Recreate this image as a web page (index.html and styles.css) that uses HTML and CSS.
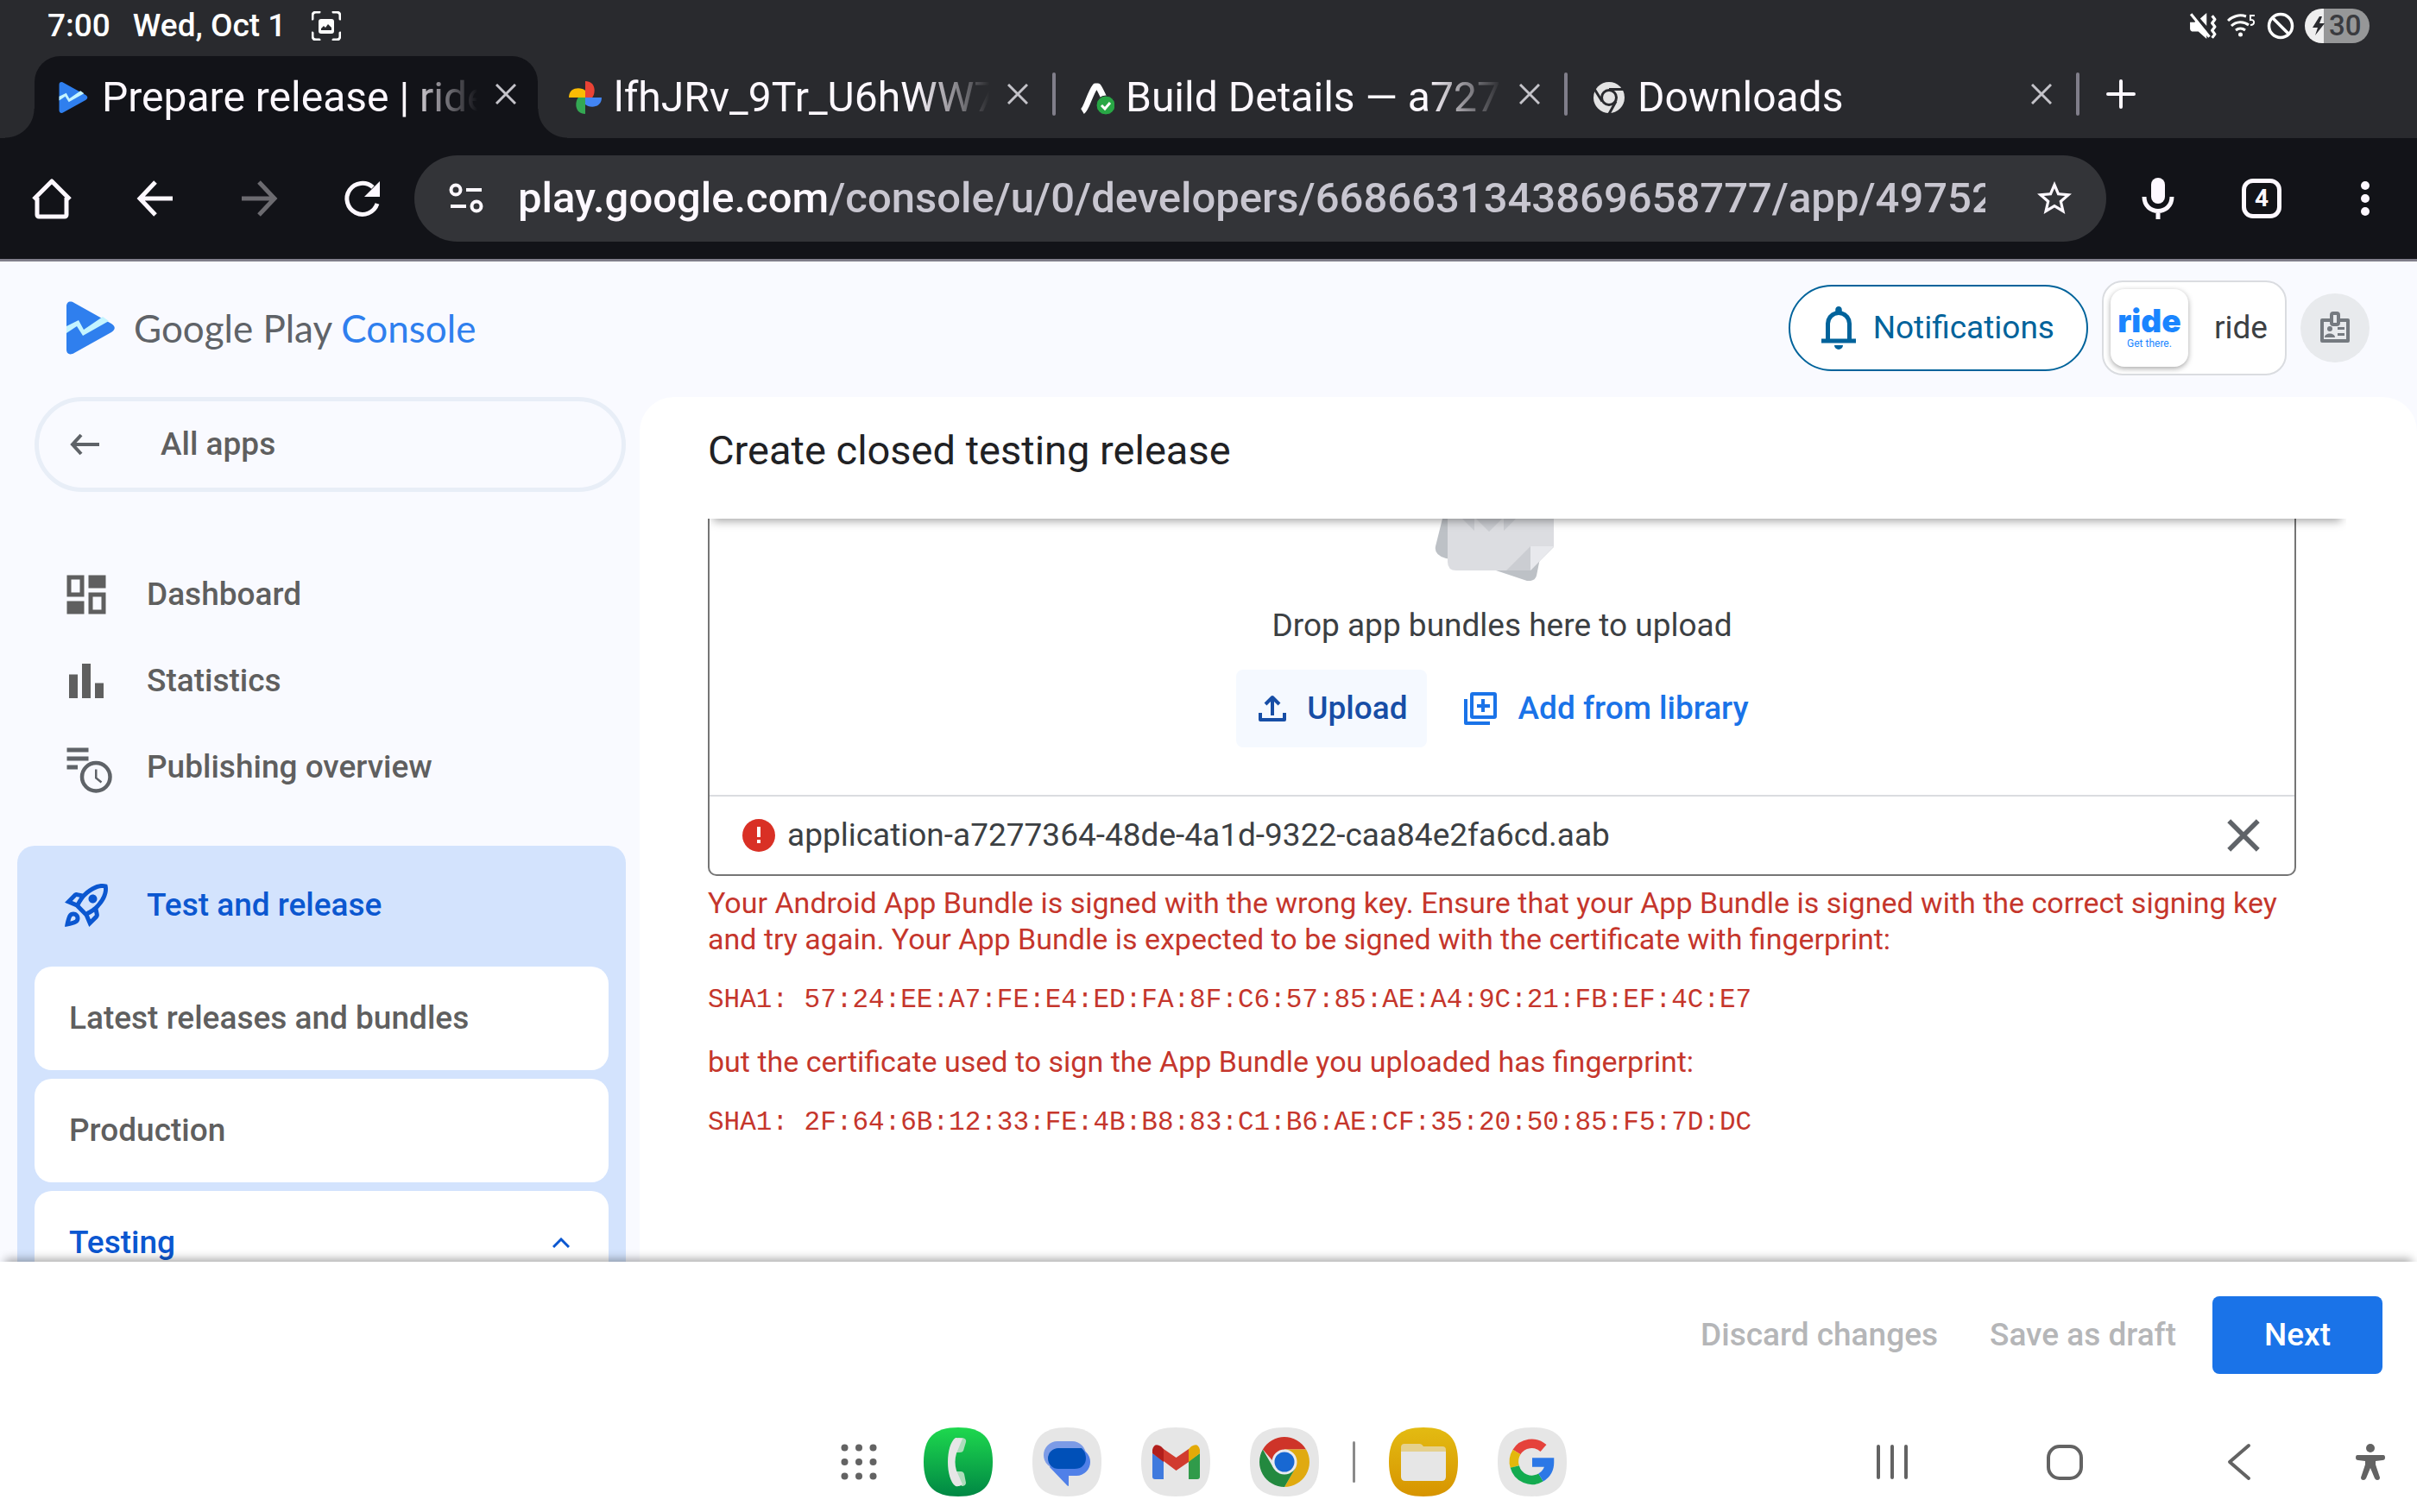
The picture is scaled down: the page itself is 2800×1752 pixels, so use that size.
FILE: index.html
```html
<!DOCTYPE html>
<html lang="en">
<head>
<meta charset="utf-8">
<title>Prepare release | ride</title>
<meta name="viewport" content="width=device-width, initial-scale=1">
<link rel="stylesheet" href="styles.css">
</head>
<body>

<div class="status">
  <div class="status-side">
    <span>7:00</span>
    <span>Wed, Oct 1</span>
    <svg class="i-shot" viewBox="0 0 34 34" aria-hidden="true"><path d="M1 9V5a4 4 0 0 1 4-4h4M25 1h4a4 4 0 0 1 4 4v4M33 25v4a4 4 0 0 1-4 4h-4M9 33H5a4 4 0 0 1-4-4v-4" fill="none" stroke="#fff" stroke-width="3" stroke-linecap="round"/><path fill-rule="evenodd" fill="#fff" d="M11 9h12a3 3 0 0 1 3 3v11a3 3 0 0 1-3 3H11a3 3 0 0 1-3-3V12a3 3 0 0 1 3-3zm0 13h12v-3l-4-4-3 4-2-2-3 3z"/></svg>
  </div>
  <div class="status-side status-right">
    <svg class="i-stat" viewBox="0 0 30 30" aria-hidden="true"><path fill="#fff" d="M1 11h5l2-2 11 12v8l-9-8H3a3 3 0 0 1-2-3zM12 7l7-6v14z"/><path d="M2 2l20 25M25 4l3 4-3 4 3 4-3 4 3 4-3 4" fill="none" stroke="#fff" stroke-width="3" stroke-linejoin="round"/></svg>
    <svg class="i-wifi" viewBox="0 0 34 30" aria-hidden="true"><path d="M1 9a20 20 0 0 1 21-5M5 15a15 15 0 0 1 20-1M10 20a9 9 0 0 1 11 0" fill="none" stroke="#fff" stroke-width="3"/><circle cx="15.500" cy="25" r="2.500" fill="#fff"/><path d="M32 3h-5v5c5-1 6 6 0 6" fill="none" stroke="#fff" stroke-width="2"/></svg>
    <svg class="i-stat" viewBox="0 0 32 32" aria-hidden="true"><circle cx="16" cy="16" r="13.500" fill="none" stroke="#fff" stroke-width="3.500"/><path d="M7 7l18 18" stroke="#fff" stroke-width="3.500"/></svg>
    <span class="battery"><svg class="i-bolt" viewBox="0 0 16 24" aria-hidden="true"><path fill="#2a2b2f" d="M9 1L1 14h6L4 23l11-14H9l3-8z"/></svg>30</span>
  </div>
</div>

<div class="tabs">
  <div class="tab tab-active">
    <svg class="tab-icon" viewBox="-2 -3 60 68" aria-hidden="true"><path fill="#2f7fee" d="M0 6C0 1 4-1 9 2l43 24c5 3 5 7 0 10L9 60c-5 3-9 1-9-4z"/><path fill="#c4f4ff" d="M0 29l14-7 6 11 22-15 7 5-30 17-7-11-12 8z"/></svg>
    <span class="tab-title">Prepare release | ride</span>
    <button class="tab-close" aria-label="Close tab"><svg class="i-x" viewBox="0 0 24 24"><path d="M1 1l22 22M23 1L1 23"/></svg></button>
  </div>
  <span class="tab-gap"></span>
  <div class="tab">
    <svg class="tab-icon" viewBox="0 0 40 40" aria-hidden="true"><path fill="#ea4335" d="M20 20V1c13 0 12 15 8 19z"/><path fill="#4285f4" d="M20 20h19c0 13-15 12-19 8z"/><path fill="#34a853" d="M20 20v19c-13 0-12-15-8-19z"/><path fill="#fbbc04" d="M20 20H1C1 7 16 8 20 12z"/></svg>
    <span class="tab-title">lfhJRv_9Tr_U6hWW7_x</span>
    <button class="tab-close" aria-label="Close tab"><svg class="i-x" viewBox="0 0 24 24"><path d="M1 1l22 22M23 1L1 23"/></svg></button>
  </div>
  <span class="tab-gap tab-line"></span>
  <div class="tab">
    <svg class="tab-icon" viewBox="0 0 40 40" aria-hidden="true"><path d="M3 36c5-3 8-20 15-29h3c4 6 7 14 10 20" fill="none" stroke="#fff" stroke-width="7" stroke-linejoin="round"/><circle cx="30" cy="29" r="11" fill="#28a745" stroke="#292a2e" stroke-width="1"/><path d="M25 29l4 4 6-7" fill="none" stroke="#fff" stroke-width="3"/></svg>
    <span class="tab-title">Build Details — a7277364</span>
    <button class="tab-close" aria-label="Close tab"><svg class="i-x" viewBox="0 0 24 24"><path d="M1 1l22 22M23 1L1 23"/></svg></button>
  </div>
  <span class="tab-gap tab-line"></span>
  <div class="tab">
    <svg class="tab-icon" viewBox="0 0 40 40" aria-hidden="true"><circle cx="20" cy="20" r="18" fill="#e3e3e3"/><circle cx="20" cy="20" r="8.500" fill="#e3e3e3" stroke="#292a2e" stroke-width="3"/><path d="M20 10.500h17M12 24.500L3 10M28 24.500L20 39" stroke="#292a2e" stroke-width="3"/></svg>
    <span class="tab-title">Downloads</span>
    <button class="tab-close" aria-label="Close tab"><svg class="i-x" viewBox="0 0 24 24"><path d="M1 1l22 22M23 1L1 23"/></svg></button>
  </div>
  <span class="tab-gap tab-line"></span>
  <button class="tab-new" aria-label="New tab"><svg class="i-plus" viewBox="0 0 34 34"><path d="M17 2v30M2 17h30"/></svg></button>
</div>

<div class="toolbar">
  <button class="tool" aria-label="Home"><svg class="i-tool" viewBox="0 0 48 48"><path d="M3 25L24 4l21 21M7 23v20a2 2 0 0 0 2 2h30a2 2 0 0 0 2-2V23" fill="none" stroke="#fdf8ff" stroke-width="5" stroke-linejoin="round"/></svg></button>
  <button class="tool" aria-label="Back"><svg class="i-tool" viewBox="0 0 48 48"><path d="M24 5L6 24l18 19M6 24h38" fill="none" stroke="#fdf8ff" stroke-width="5"/></svg></button>
  <button class="tool" aria-label="Forward"><svg class="i-tool" viewBox="0 0 48 48"><path d="M24 5l18 19-18 19M42 24H4" fill="none" stroke="#6c6b70" stroke-width="5"/></svg></button>
  <button class="tool" aria-label="Reload"><svg class="i-tool" viewBox="0 0 48 48"><path d="M41 30A18 18 0 1 1 36 11" fill="none" stroke="#fdf8ff" stroke-width="5"/><path fill="#fdf8ff" d="M44 4v18H26z"/></svg></button>
  <div class="omnibox">
    <button class="tool" aria-label="Site information"><svg class="i-site" viewBox="0 0 40 36"><g fill="none" stroke="#fdf8ff" stroke-width="4"><circle cx="8" cy="8" r="5.500"/><circle cx="32" cy="27" r="5.500"/><path d="M20 8h18M2 27h18"/></g></svg></button>
    <div class="url" role="textbox" aria-label="Address"><span class="url-host">play.google.com</span>/console/u/0/developers/6686631343869658777/app/4975247</div>
    <button class="tool" aria-label="Bookmark"><svg class="i-tool" viewBox="0 0 24 24"><path fill="#fdf8ff" d="M22 9.240l-7.190-.62L12 2 9.190 8.630 2 9.240l5.460 4.730L5.820 21 12 17.270 18.180 21l-1.630-7.030zM12 15.400l-3.760 2.270 1-4.280-3.320-2.880 4.380-.38L12 6.100l1.710 4.040 4.380.38-3.320 2.880 1 4.280z"/></svg></button>
  </div>
  <button class="tool" aria-label="Voice search"><svg class="i-tool" viewBox="0 0 48 48"><rect x="16" y="0" width="16" height="30" rx="8" fill="#fdf8ff"/><path d="M8 22c0 22 32 22 32 0M24 38v10" fill="none" stroke="#fdf8ff" stroke-width="5"/></svg></button>
  <button class="tool" aria-label="Open tabs"><span class="tab-count">4</span></button>
  <button class="tool" aria-label="Menu"><svg class="i-tool" viewBox="0 0 48 48"><g fill="#fdf8ff"><circle cx="24" cy="9" r="5"/><circle cx="24" cy="24" r="5"/><circle cx="24" cy="39" r="5"/></g></svg></button>
</div>

<div class="page">
  <header class="top">
    <a class="brand" href="#">
      <svg class="brand-mark" viewBox="0 0 56 62" aria-hidden="true"><path fill="#2f7fee" d="M0 6C0 1 4-1 9 2l43 24c5 3 5 7 0 10L9 60c-5 3-9 1-9-4z"/><path fill="#c4f4ff" d="M0 29l14-7 6 11 22-15 7 5-30 17-7-11-12 8z"/></svg>
      <span>Google Play <span class="brand-blue">Console</span></span>
    </a>
    <div class="top-right">
      <button class="notif"><svg class="i-nav" viewBox="0 0 24 24" aria-hidden="true"><path fill="#01639b" d="M4 19v-2h2v-7q0-2.080 1.250-3.690Q8.500 4.700 10.500 4.200V3.500q0-.63.44-1.060Q11.370 2 12 2t1.060.44q.44.43.44 1.060v.7q2 .5 3.250 2.110Q18 7.920 18 10v7h2v2zm8 3q-.82 0-1.410-.59Q10 20.830 10 20h4q0 .83-.59 1.410Q12.830 22 12 22zm-4-5h8v-7q0-1.650-1.180-2.830Q13.650 6 12 6q-1.650 0-2.830 1.170Q8 8.350 8 10z"/></svg>Notifications</button>
      <button class="app-switch"><span class="app-icon"><span class="app-name">ride</span><span class="app-tag">Get there.</span></span>ride</button>
      <button class="account" aria-label="Account"><svg class="i-badge" viewBox="0 0 40 40" aria-hidden="true"><g fill="none" stroke="#757a80" stroke-width="4"><path d="M15 11H5v24h30V11H25" stroke-linejoin="round"/><rect x="16" y="3" width="8" height="13" rx="2"/></g><g fill="#757a80"><circle cx="14" cy="21" r="3"/><path d="M8 31c0-6 12-6 12 0zM23 19h8v3h-8zM23 26h8v3h-8z"/></g></svg></button>
    </div>
  </header>

  <div class="columns">
    <nav class="side">
      <a class="all-apps" href="#"><svg class="i-back" viewBox="0 0 36 28" aria-hidden="true"><path d="M14 3L4 14l10 11M4 14h31" fill="none" stroke="#5f6368" stroke-width="4"/></svg>All apps</a>
      <ul class="menu">
        <li><a class="menu-link" href="#"><svg class="i-nav" viewBox="0 0 24 24" aria-hidden="true"><path fill="#5f5f5f" fill-rule="evenodd" d="M3 3h8v10H3zm2 2v6h4V5zM3 15h8v6H3zM13 3h8v6h-8zM13 11h8v10h-8zm2 2v6h4v-6z"/></svg>Dashboard</a></li>
        <li><a class="menu-link" href="#"><svg class="i-nav" viewBox="0 0 24 24" aria-hidden="true"><path fill="#5f5f5f" d="M4 9h4v11H4zM10 4h4v16h-4zM16 13h4v7h-4z"/></svg>Statistics</a></li>
        <li><a class="menu-link" href="#"><svg class="i-nav" viewBox="0 0 24 24" aria-hidden="true"><path fill="#5f6368" d="M3 3h10v2H3zM3 7h10v2H3zM3 11h5v2H3z"/><circle cx="16.500" cy="16.500" r="6.500" fill="none" stroke="#5f6368" stroke-width="1.800"/><path d="M16.500 13v4l2.500 2" fill="none" stroke="#5f6368"/></svg>Publishing overview</a></li>
      </ul>
      <section class="group">
        <a class="menu-link group-title" href="#"><svg class="i-nav" viewBox="0 0 24 24" aria-hidden="true"><path fill="#0b57d0" d="M6 15c-.83 0-1.580.34-2.120.88C2.700 17.060 2 22 2 22s4.940-.7 6.120-1.880C8.660 19.580 9 18.830 9 18c0-1.660-1.340-3-3-3zm.71 3.710c-.28.28-2.170.76-2.170.76s.47-1.880.76-2.170c.17-.19.42-.3.7-.3.55 0 1 .45 1 1 0 .28-.11.53-.29.71zm10.710-5.060c6.360-6.360 4.240-11.310 4.240-11.310S16.710.22 10.350 6.580l-2.490-.5c-.65-.13-1.330.08-1.810.55L2 10.690l5 2.140L11.170 17l2.140 5 4.050-4.050c.47-.47.68-1.150.55-1.810zM7.410 10.830l-1.910-.82 1.970-1.970 1.440.29c-.57.83-1.080 1.700-1.500 2.500zm6.580 7.670l-.82-1.910c.8-.42 1.670-.93 2.490-1.500l.29 1.440zM16 12.240c-1.320 1.320-3.380 2.400-4.040 2.730l-2.930-2.930c.32-.65 1.400-2.710 2.730-4.040 4.680-4.680 8.230-3.990 8.230-3.990s.69 3.550-3.990 8.230zM15 11c1.100 0 2-.9 2-2s-.9-2-2-2-2 .9-2 2 .9 2 2 2z"/></svg>Test and release</a>
        <a class="sub" href="#">Latest releases and bundles</a>
        <a class="sub" href="#">Production</a>
        <a class="sub sub-open" href="#">Testing<svg class="i-chev" viewBox="0 0 20 12" aria-hidden="true"><path d="M1 11l9-9 9 9" fill="none" stroke="#0b57d0" stroke-width="3"/></svg></a>
      </section>
    </nav>

    <main class="panel">
      <div class="panel-head"><h1>Create closed testing release</h1></div>
      <div class="panel-body">
        <div class="upload-box">
          <div class="drop">
            <svg class="sheets" viewBox="0 0 140 72" aria-hidden="true"><path fill="#bdc1c6" d="M10 0h30v50L14 46Q0 42 2 32zM66 58l42 14q9 1 11-6l6-30z"/><path fill="#dcdde1" d="M16 0h123v33l-27 27H26q-10 0-10-10z"/><path fill="#cbcdd2" d="M33 0h14v14zM49 0h30L64 15zM81 0h14L81 14zM112 32v28H84z"/><path fill="#e8e9ed" d="M112 32h27l-27 28z"/></svg>
            <p class="drop-text">Drop app bundles here to upload</p>
            <div class="drop-actions">
              <button class="text-btn upload-btn"><svg class="i-up" viewBox="0 0 32 32" aria-hidden="true"><path d="M16 24V4M8 11l8-8 8 8M2 21v8h28v-8" fill="none" stroke="#174ea6" stroke-width="4" stroke-linejoin="round"/></svg>Upload</button>
              <button class="text-btn"><svg class="i-lib" viewBox="0 0 40 40" aria-hidden="true"><g fill="none" stroke="#1a73e8" stroke-width="4" stroke-linejoin="round"><rect x="10" y="3" width="27" height="27" rx="1"/><path d="M3 9v28h28M23 9v15M16 17h15"/></g></svg>Add from library</button>
            </div>
          </div>
          <div class="file">
            <svg class="i-err" viewBox="0 0 38 38" aria-hidden="true"><circle cx="19" cy="19" r="19" fill="#d93025"/><path fill="#fff" d="M17 9h4v12h-4zM17 24h4v4h-4z"/></svg>
            <span class="file-name">application-a7277364-48de-4a1d-9322-caa84e2fa6cd.aab</span>
            <button class="file-x" aria-label="Remove file"><svg class="i-remove" viewBox="0 0 34 34"><path d="M2 2l30 30M32 2L2 32" stroke="#5f6368" stroke-width="5"/></svg></button>
          </div>
        </div>
        <div class="errors">
          <p>Your Android App Bundle is signed with the wrong key. Ensure that your App Bundle is signed with the correct signing key and try again. Your App Bundle is expected to be signed with the certificate with fingerprint:</p>
          <p class="mono">SHA1: 57:24:EE:A7:FE:E4:ED:FA:8F:C6:57:85:AE:A4:9C:21:FB:EF:4C:E7</p>
          <p>but the certificate used to sign the App Bundle you uploaded has fingerprint:</p>
          <p class="mono">SHA1: 2F:64:6B:12:33:FE:4B:B8:83:C1:B6:AE:CF:35:20:50:85:F5:7D:DC</p>
        </div>
      </div>
    </main>
  </div>
</div>

<footer class="foot">
  <div class="actions">
    <button class="plain" disabled>Discard changes</button>
    <button class="plain" disabled>Save as draft</button>
    <button class="next">Next</button>
  </div>
</footer>

<div class="sysbar">
  <div class="dock">
    <button class="dock-apps" aria-label="All apps"><svg class="i-grid" viewBox="0 0 42 42"><g fill="#636363"><circle cx="4.500" cy="4.500" r="4"/><circle cx="21" cy="4.500" r="4"/><circle cx="37.500" cy="4.500" r="4"/><circle cx="4.500" cy="21" r="4"/><circle cx="21" cy="21" r="4"/><circle cx="37.500" cy="21" r="4"/><circle cx="4.500" cy="37.500" r="4"/><circle cx="21" cy="37.500" r="4"/><circle cx="37.500" cy="37.500" r="4"/></g></svg></button>
    <button class="dock-app" aria-label="Phone"><svg class="i-dock" viewBox="0 0 80 80"><defs><linearGradient id="gp" x2="0" y2="1"><stop offset="0" stop-color="#1ed84e"/><stop offset="1" stop-color="#008744"/></linearGradient></defs><path fill="url(#gp)" d="M40 0C68 0 80 12 80 40S68 80 40 80 0 68 0 40 12 0 40 0z"/><path fill="#addcbb" d="M40 12h5q5 1 4 5l-3 10q-1 2-4 2h-5zM37 51h6q3 0 4 3l2 10q0 4-5 4z"/><path fill="#e6e6e6" d="M45 13l-7 17q-3 10 0 20l7 16q-4 3-8 2C25 60 25 20 37 12q4 0 8 1z"/></svg></button>
    <button class="dock-app" aria-label="Messages"><svg class="i-dock" viewBox="0 0 80 80"><path class="tile" d="M40 0C68 0 80 12 80 40S68 80 40 80 0 68 0 40 12 0 40 0z"/><rect x="13" y="16" width="49" height="32" rx="16" fill="#7c9be6"/><path fill="#5080e8" d="M32 24h19a16 16 0 0 1 0 32h-9v11q0 2-2 0L20 46z"/><path fill="#0050b8" d="M30 24h27c8 7 7 24-8 24H30a12 12 0 0 1 0-24z"/></svg></button>
    <button class="dock-app" aria-label="Gmail"><svg class="i-dock" viewBox="0 0 80 80"><path class="tile" d="M40 0C68 0 80 12 80 40S68 80 40 80 0 68 0 40 12 0 40 0z"/><path fill="#3f7ade" d="M13 30l13 9v21H16a3 3 0 0 1-3-3z"/><path fill="#309b4a" d="M68 30l-13 9v21h10a3 3 0 0 0 3-3z"/><path fill="#d13b2f" d="M26 25l14.500 10L55 25v15L40.500 50 26 39z"/><path fill="#b21f1c" d="M13 30v-4q2-9 10-4l3 3v15z"/><path fill="#e3aa08" d="M68 30v-4q-2-9-10-4l-3 3v15z"/></svg></button>
    <button class="dock-app" aria-label="Chrome"><svg class="i-dock" viewBox="0 0 80 80"><path class="tile" d="M40 0C68 0 80 12 80 40S68 80 40 80 0 68 0 40 12 0 40 0z"/><path fill="#ce3429" d="M40 40H27.500L14.900 25.500A29 29 0 0 1 65 25.500H40z"/><path fill="#e0aa10" d="M40 25.500h25.100A29 29 0 0 1 40 69l12.600-21.800z"/><path fill="#23893f" d="M14.900 25.500A29 29 0 0 0 40 69l12.600-21.800L27.400 47.200z"/><circle cx="40" cy="40" r="14.500" fill="#e8eaf0"/><circle cx="40" cy="40" r="11.500" fill="#1868d2"/></svg></button>
    <span class="dock-line"></span>
    <button class="dock-app" aria-label="My Files"><svg class="i-dock" viewBox="0 0 80 80"><defs><linearGradient id="gf" x2="0" y2="1"><stop offset="0" stop-color="#e3bb12"/><stop offset="1" stop-color="#d79400"/></linearGradient></defs><path fill="url(#gf)" d="M40 0C68 0 80 12 80 40S68 80 40 80 0 68 0 40 12 0 40 0z"/><path fill="#e5d08d" d="M14 30v-7q0-4 4-4h18q2 0 4 3h22q4 0 4 4v4z"/><path fill="#e6e6e6" d="M14 28h52v29q0 5-5 5H19q-5 0-5-5z"/></svg></button>
    <button class="dock-app" aria-label="Google"><svg class="i-dock" viewBox="0 0 80 80"><path class="tile" d="M40 0C68 0 80 12 80 40S68 80 40 80 0 68 0 40 12 0 40 0z"/><g fill="none" stroke-width="10.500"><path stroke="#e5423b" d="M22 28.500A20.500 20.500 0 0 1 53 24"/><path stroke="#e3b80c" d="M19.800 45.500A20.500 20.500 0 0 1 22 28.500"/><path stroke="#14ab50" d="M50 58A20.500 20.500 0 0 1 19.800 45.500"/><path stroke="#2c78e6" d="M40 40.500h20c0 8-4 14-10 17.500"/></g></svg></button>
  </div>
  <div class="sysnav">
    <button class="sys" aria-label="Recents"><svg class="i-sys" viewBox="0 0 44 44"><path d="M6 4v36M22 4v36M38 4v36"/></svg></button>
    <button class="sys" aria-label="Home"><svg class="i-sys" viewBox="0 0 44 44"><rect x="3" y="4" width="38" height="37" rx="13"/></svg></button>
    <button class="sys" aria-label="Back"><svg class="i-sys" viewBox="0 0 44 44"><path d="M35 3L13 22l22 19"/></svg></button>
    <button class="sys sys-narrow" aria-label="Accessibility"><svg class="i-sys" viewBox="0 0 44 44"><g fill="#636363" stroke="none"><circle cx="22" cy="6" r="5"/><path d="M7 14h30q2 0 2 3t-3 3l-8 1v4l5 15q0 3-3 3-2 0-3-2l-5-12-5 12q-1 2-3 2-3 0-3-3l5-15v-4l-8-1q-3 0-3-3t2-3z"/></g></svg></button>
  </div>
</div>

</body>
</html>
```
FILE: styles.css
```css
* {
  box-sizing: border-box;
}

body {
  margin: 0;
  height: 100vh;
  display: flex;
  flex-direction: column;
  overflow: hidden;
  background: #fff;
  color: #5f5f5f;
  font-family: Roboto, "Liberation Sans", sans-serif;
  font-size: 37px;
  line-height: 48px;
}

button {
  margin: 0;
  padding: 0;
  border: 0;
  background: none;
  color: inherit;
  font: inherit;
}

a {
  color: inherit;
  text-decoration: none;
}

svg {
  display: block;
  flex: none;
}

p,
h1,
ul {
  margin: 0;
  padding: 0;
}

ul {
  list-style: none;
}

/* Status bar */

.status {
  flex: none;
  height: 65px;
  padding: 5px 55px 11px;
  display: flex;
  justify-content: space-between;
  align-items: center;
  background: #292a2e;
  color: #fff;
  font-weight: 500;
}

.status-side {
  display: flex;
  align-items: center;
  gap: 26px;
}

.status-right {
  gap: 12px;
}

.i-shot {
  width: 34px;
  height: 34px;
  margin-left: 4px;
}

.i-stat {
  width: 32px;
  height: 32px;
}

.i-wifi {
  width: 34px;
  height: 30px;
}

.battery {
  display: flex;
  align-items: center;
  gap: 4px;
  width: 75px;
  height: 40px;
  padding-left: 8px;
  border-radius: 20px;
  background: linear-gradient(90deg, #efefef 22px, #969798 22px);
  color: #3a3b3f;
  font-size: 33px;
}

.i-bolt {
  width: 16px;
  height: 24px;
}

/* Tab strip */

.tabs {
  flex: none;
  height: 95px;
  padding-left: 40px;
  display: flex;
  align-items: center;
  background: #292a2e;
  color: #fdf8ff;
  font-size: 48px;
}

.tab {
  position: relative;
  flex: 0 1 583px;
  min-width: 0;
  height: 95px;
  padding: 0 17px 0 25px;
  display: flex;
  align-items: center;
}

.tab-active {
  background: #121318;
  border-radius: 30px 30px 0 0;
}

.tab-active::before,
.tab-active::after {
  content: "";
  position: absolute;
  bottom: 0;
  width: 34px;
  height: 34px;
}

.tab-active::before {
  right: 100%;
  background: radial-gradient(circle at 0 0, transparent 33px, #121318 34px);
}

.tab-active::after {
  left: 100%;
  background: radial-gradient(circle at 100% 0, transparent 33px, #121318 34px);
}

.tab-icon {
  width: 40px;
  height: 40px;
  margin-right: 13px;
}

.tab-title {
  flex: 1;
  min-width: 0;
  overflow: hidden;
  white-space: nowrap;
  line-height: 64px;
  -webkit-mask-image: linear-gradient(90deg, #000 calc(100% - 90px), transparent 99%);
  mask-image: linear-gradient(90deg, #000 calc(100% - 90px), transparent 99%);
}

.tab-close {
  width: 40px;
  height: 48px;
  margin: 0 0 8px 8px;
  display: grid;
  place-items: center;
}

.i-x {
  width: 24px;
  height: 24px;
  stroke: #c4c3c9;
  stroke-width: 3px;
}

.tab-gap {
  flex: none;
  width: 4px;
  height: 50px;
  margin: 0 3px 8px;
  border-radius: 2px;
}

.tab-line {
  background: #807e8a;
}

.tab-new {
  margin: 0 0 8px 28px;
}

.i-plus {
  width: 34px;
  height: 34px;
  stroke: #fdf8ff;
  stroke-width: 4px;
  stroke-linecap: round;
}

/* Browser toolbar */

.toolbar {
  flex: none;
  height: 143px;
  display: flex;
  align-items: center;
  background: #121318;
  border-bottom: 3px solid #807e8a;
}

.tool {
  flex: none;
  width: 120px;
  height: 100px;
  display: grid;
  place-items: center;
}

.i-tool {
  width: 48px;
  height: 48px;
}

.i-site {
  width: 40px;
  height: 36px;
}

.omnibox {
  flex: 1;
  min-width: 0;
  height: 100px;
  display: flex;
  align-items: center;
  border-radius: 50px;
  background: #333438;
}

.url {
  flex: 1;
  min-width: 0;
  margin-right: 20px;
  overflow: hidden;
  white-space: nowrap;
  color: #c8c6d0;
  font-size: 49px;
  font-weight: 500;
  line-height: 64px;
}

.url-host {
  color: #fdf8ff;
}

.tab-count {
  width: 46px;
  height: 46px;
  border: 5px solid #fdf8ff;
  border-radius: 13px;
  color: #fdf8ff;
  font-size: 28px;
  font-weight: 700;
  line-height: 36px;
  text-align: center;
}

/* Console header */

.page {
  flex: 1;
  min-height: 0;
  overflow: hidden;
  background: #f9faff;
}

.top {
  height: 157px;
  padding: 0 55px 4px 77px;
  display: flex;
  justify-content: space-between;
  align-items: center;
}

.brand {
  display: flex;
  align-items: center;
  gap: 22px;
  font-family: Lato, sans-serif;
  font-size: 44px;
  line-height: 56px;
  color: #5f6368;
}

.brand-mark {
  width: 56px;
  height: 62px;
}

.brand-blue {
  color: #2f7fee;
}

.top-right {
  display: flex;
  align-items: center;
  gap: 16px;
}

.notif {
  height: 100px;
  padding: 0 37px 0 26px;
  display: flex;
  align-items: center;
  gap: 10px;
  border: 2px solid #01639b;
  border-radius: 50px;
  background: #fff;
  color: #01639b;
}

.i-nav {
  width: 60px;
  height: 60px;
}

.app-switch {
  height: 110px;
  padding: 0 20px 0 8px;
  display: flex;
  align-items: center;
  gap: 30px;
  border: 2px solid #dadce0;
  border-radius: 24px;
  background: #fff;
  color: #3c4043;
}

.app-icon {
  width: 90px;
  height: 90px;
  display: flex;
  flex-direction: column;
  align-items: center;
  justify-content: center;
  border-radius: 16px;
  background: #fff;
  box-shadow: 0 2px 6px rgba(0, 0, 0, 0.35);
  color: #1a85ff;
}

.app-name {
  font-family: Inter, sans-serif;
  font-size: 37px;
  font-weight: 900;
  line-height: 36px;
}

.app-tag {
  font-size: 12px;
  line-height: 16px;
}

.account {
  width: 80px;
  height: 80px;
  display: grid;
  place-items: center;
  border-radius: 50%;
  background: #e8eaed;
}

.i-badge {
  width: 40px;
  height: 40px;
}

/* Side navigation */

.columns {
  display: flex;
  align-items: stretch;
}

.side {
  flex: 0 0 741px;
  padding: 0 16px 0 20px;
  font-weight: 500;
}

.all-apps {
  height: 110px;
  margin-left: 20px;
  padding-left: 35px;
  display: flex;
  align-items: center;
  gap: 70px;
  border: 5px solid #e8eef7;
  border-radius: 55px;
}

.i-back {
  width: 36px;
  height: 28px;
}

.menu {
  padding: 69px 0 41px;
}

.menu-link {
  height: 100px;
  padding-left: 50px;
  display: flex;
  align-items: center;
  gap: 40px;
}

.group {
  height: 900px;
  padding: 0 20px;
  display: flex;
  flex-direction: column;
  gap: 10px;
  border-radius: 20px;
  background: #d3e3fd;
}

.group-title {
  height: 130px;
  padding: 8px 0 0 30px;
  color: #0b57d0;
}

.sub {
  height: 120px;
  padding: 0 45px 0 40px;
  display: flex;
  align-items: center;
  justify-content: space-between;
  border-radius: 20px;
  background: #fff;
}

.sub-open {
  color: #0b57d0;
}

.i-chev {
  width: 20px;
  height: 12px;
}

/* Release panel */

.panel {
  flex: 1;
  min-width: 0;
  border-radius: 40px 40px 0 0;
  background: #fff;
}

.panel-head {
  position: relative;
  height: 141px;
  margin: 0 82px 0 79px;
  display: flex;
  align-items: center;
  padding-bottom: 17px;
  background: #fff;
  box-shadow: 0 9px 10px -6px rgba(0, 0, 0, 0.35);
  clip-path: inset(0 0 -20px 0);
}

h1 {
  color: #202124;
  font-size: 47px;
  font-weight: 400;
  line-height: 56px;
}

.panel-body {
  padding: 0 140px 0 79px;
}

.upload-box {
  border: 2px solid #757575;
  border-top: 0;
  border-radius: 0 0 10px 10px;
}

.drop {
  height: 322px;
  display: flex;
  flex-direction: column;
  align-items: center;
  border-bottom: 2px solid #dadce0;
}

.sheets {
  width: 140px;
  height: 72px;
  margin-right: 18px;
}

.drop-text {
  margin: 28px 0 27px;
  color: #3c4043;
}

.drop-actions {
  display: flex;
  gap: 20px;
}

.text-btn {
  height: 90px;
  padding: 0 22px;
  display: flex;
  align-items: center;
  gap: 24px;
  border-radius: 8px;
  color: #1a73e8;
  font-weight: 500;
}

.upload-btn {
  padding-left: 26px;
  background: #f5f9ff;
  color: #174ea6;
}

.i-up {
  width: 32px;
  height: 32px;
}

.i-lib {
  width: 40px;
  height: 40px;
}

.file {
  height: 90px;
  padding: 0 40px 0 38px;
  display: flex;
  align-items: center;
  gap: 14px;
  color: #3c4043;
}

.i-err,
.i-remove {
  width: 38px;
  height: 38px;
}

.file-name {
  flex: 1;
}

.errors {
  padding-top: 10px;
  display: flex;
  flex-direction: column;
  gap: 29px;
  color: #c5362c;
  font-size: 34px;
  line-height: 42px;
}

.mono {
  font-family: "Liberation Mono", monospace;
  font-size: 31px;
}

/* Action footer */

.foot {
  position: relative;
  flex: none;
  background: #fff;
  box-shadow: 0 -9px 10px -6px rgba(0, 0, 0, 0.35);
}

.actions {
  padding: 40px 40px 44px;
  display: flex;
  justify-content: flex-end;
  align-items: center;
  gap: 42px;
  font-weight: 500;
}

.plain {
  padding: 0 9px;
  color: #b5b6b8;
}

.next {
  width: 197px;
  height: 90px;
  margin-left: -9px;
  border-radius: 8px;
  background: #1a73e8;
  color: #fff;
}

/* System bar */

.sysbar {
  flex: none;
  height: 116px;
  display: grid;
  grid-template-columns: 1fr auto 1fr;
  align-items: center;
  background: #fff;
}

.dock {
  grid-column: 2;
  padding-right: 11px;
  display: flex;
  align-items: center;
  gap: 46px;
}

.dock-apps {
  padding-right: 8px;
}

.i-grid {
  width: 42px;
  height: 42px;
}

.i-dock {
  width: 80px;
  height: 80px;
}

.tile {
  fill: #e6e6e6;
}

.dock-line {
  width: 3px;
  height: 48px;
  margin: 0 -7px;
  border-radius: 2px;
  background: #8a8a8a;
}

.sysnav {
  display: flex;
  justify-content: flex-end;
}

.sys {
  width: 200px;
  height: 80px;
  display: grid;
  place-items: center;
}

.sys-narrow {
  width: 108px;
}

.i-sys {
  width: 44px;
  height: 44px;
  fill: none;
  stroke: #636363;
  stroke-width: 4px;
  stroke-linecap: round;
  stroke-linejoin: round;
}
```
